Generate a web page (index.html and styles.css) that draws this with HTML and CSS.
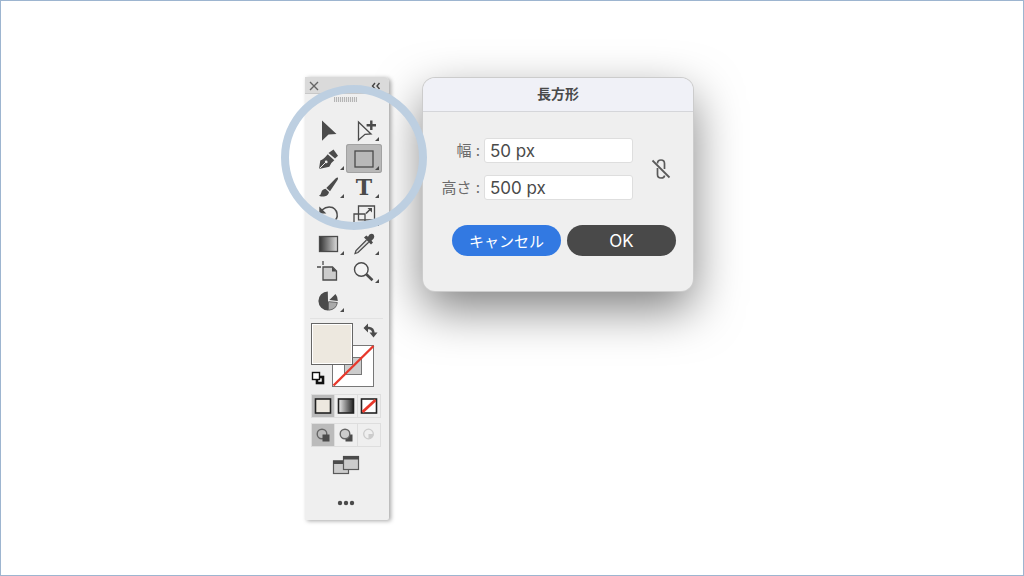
FILE: index.html
```html
<!DOCTYPE html>
<html lang="ja">
<head>
  <meta charset="UTF-8" />
  <meta name="viewport" content="width=device-width, initial-scale=1.0"/>
  <title>長方形ツール</title>
  <link rel="stylesheet" href="styles.css">
</head>
<body>

  <main class="stage">
    <aside class="panel">
      <div class="panel-head">
        <button class="head-btn" aria-label="閉じる">
          <svg width="10" height="10" viewBox="0 0 10 10"><path d="M1 1l8 8M9 1l-8 8" stroke="#666" stroke-width="1.4"/></svg>
        </button>
        <button class="head-btn" aria-label="折りたたむ">
          <svg width="10" height="10" viewBox="0 0 10 10"><path d="M4 2L1.5 5L4 8M8.5 2L6 5L8.5 8" fill="none" stroke="#444" stroke-width="1.4"/></svg>
        </button>
      </div>
      <div class="grip"></div>

      <div class="tools">
        <button class="tool" aria-label="選択">
          <svg viewBox="0 0 36 28"><path class="dark" d="M12 4.5L26.5 18L18.5 18.6L12 24.7z"/></svg>
        </button>
        <button class="tool" aria-label="グループ選択">
          <svg viewBox="0 0 36 28">
            <path class="line" d="M12.5 6L25 18L19 18.3L12.5 24z"/>
            <path d="M25.3 4.500v9.400M20.600 9.200H30" stroke="#4b4b4b" stroke-width="2.4"/>
            <path class="dark" d="M33 21v4h-4z"/>
          </svg>
        </button>
        <button class="tool" aria-label="ペン">
          <svg viewBox="0 0 36 28">
            <path class="dark" d="M18.5 8L23.5 4.5L28 10.8L25 13.5z"/>
            <path class="dark" d="M9 24L10.3 15.5Q13.5 14.5 17.7 9.2L24.3 15.3Q20.5 18 19.3 21.8z"/>
            <path d="M9.5 23.5l6-6" stroke="#eee" stroke-width="1"/>
            <circle cx="16.2" cy="16.9" r="1.4" fill="#eee"/>
            <path class="dark" d="M34 21v4h-4z"/>
          </svg>
        </button>
        <button class="tool selected" aria-label="長方形">
          <svg viewBox="0 0 36 28">
            <rect x="9" y="6" width="18" height="16" fill="#b8b8b8" stroke="#4b4b4b" stroke-width="1.3"/>
            <path class="dark" d="M33 21v4h-4z"/>
          </svg>
        </button>
        <button class="tool" aria-label="ブラシ">
          <svg viewBox="0 0 36 28">
            <path class="dark" d="M27.8 4.5Q28.5 5.5 27.5 7L20 18.2L16.3 14.9L25.800 5.200Q27 4.200 27.800 4.500z"/>
            <path class="dark" d="M15.5 15.8L19 19Q18.5 22.5 15 23.3Q12 24 9 22.7Q11 21.8 11.3 19.5Q12 16.3 15.5 15.8z"/>
            <path class="dark" d="M34 21v4h-4z"/>
          </svg>
        </button>
        <button class="tool" aria-label="文字">
          <svg viewBox="0 0 36 28">
            <text class="type" x="18" y="22" text-anchor="middle">T</text>
            <path class="dark" d="M33 21v4h-4z"/>
          </svg>
        </button>
        <button class="tool" aria-label="回転">
          <svg viewBox="0 0 36 28">
            <path d="M12 9Q17 4.5 22.5 6.5Q27.5 9 27.2 15.5Q26 21 20 22" fill="none" stroke="#4b4b4b" stroke-width="1.5"/>
            <path class="dark" d="M9.3 5.5v7h7z"/>
          </svg>
        </button>
        <button class="tool" aria-label="拡大・縮小">
          <svg viewBox="0 0 36 28">
            <path class="line" d="M12.5 5H28.5V18.8H12.5zM8 13H19V22H8z"/>
            <path d="M20 12.5l4-4" stroke="#4b4b4b" stroke-width="1.6"/>
            <path class="dark" d="M21.5 7H26v4.5z"/>
            <path class="dark" d="M33 21v4h-4z"/>
          </svg>
        </button>
        <button class="tool" aria-label="グラデーション">
          <svg viewBox="0 0 36 28">
            <defs><linearGradient id="fade"><stop offset="0" stop-color="#333"/><stop offset="1" stop-color="#ddd"/></linearGradient></defs>
            <rect x="9.5" y="6.5" width="18" height="15" fill="url(#fade)" stroke="#4b4b4b" stroke-width="1.3"/>
            <path class="dark" d="M34 21v4h-4z"/>
          </svg>
        </button>
        <button class="tool" aria-label="スポイト">
          <svg viewBox="0 0 36 28">
            <path d="M20.5 10L10 20.5L9 23.5L12 22.5L22.7 12.2" fill="#ddd" stroke="#4b4b4b" stroke-width="1.2"/>
            <path class="dark" d="M18 7.500L20.3 5.500L22 6.700L23.500 4.500Q26 3 27.800 4.700Q29 6.500 27.500 8.700L25.500 10.800L27 12.500L25 14.500z"/>
            <path class="dark" d="M33 21v4h-4z"/>
          </svg>
        </button>
        <button class="tool" aria-label="アートボード">
          <svg viewBox="0 0 36 28">
            <path d="M13 9H22.5L26.5 13V22H13z" fill="#ccc" stroke="#4b4b4b" stroke-width="1.3"/>
            <path class="dark" d="M22 9V13.500H26.5z"/>
            <path class="line" d="M13 3V7M7 9H11"/>
          </svg>
        </button>
        <button class="tool" aria-label="ズーム">
          <svg viewBox="0 0 36 28">
            <circle cx="15.3" cy="11.5" r="6.8" fill="#f4f4f4" stroke="#4b4b4b" stroke-width="1.4"/>
            <path d="M20.3 16.3L26.5 22.3" stroke="#4b4b4b" stroke-width="2.6"/>
            <path class="dark" d="M33 21v4h-4z"/>
          </svg>
        </button>
        <button class="tool" aria-label="グラフ">
          <svg viewBox="0 0 36 28">
            <path class="dark" d="M17.8 4.5A9.5 9.5 0 1 0 18 23.500V14z"/>
            <path class="dark" d="M19.3 13L25.5 7Q28 10 27.8 14z"/>
            <path d="M18.5 14.700L27.3 15.500Q26.5 22.500 18.5 23.200z" fill="#aaa" stroke="#666" stroke-width="1"/>
            <path class="dark" d="M34 21v4h-4z"/>
          </svg>
        </button>
      </div>

      <div class="colors">
        <svg viewBox="0 0 72 68" width="72" height="68" role="img" aria-label="塗りと線">
          <!-- stroke swatch -->
          <rect x="22.500" y="23.5" width="41" height="41" fill="#fff" stroke="#777"/>
          <rect x="34.5" y="35.5" width="17" height="17" fill="#ccc" stroke="#777"/>
          <path d="M23.5 63.5L63.5 24" stroke="#e8382b" stroke-width="2.4"/>
          <!-- fill swatch -->
          <rect x="1.5" y="1.5" width="41" height="41" fill="#ede8df" stroke="#666"/>
          <rect x="2.5" y="2.5" width="39" height="39" fill="none" stroke="#fff"/>
          <!-- swap -->
          <path d="M56 6H59Q63.5 6.5 63.5 12" fill="none" stroke="#4b4b4b" stroke-width="2.4"/>
          <path class="dark" d="M58 1.5V10.5L53.500 6zM59.5 10.500H67.5L63.5 15.5z"/>
          <!-- default -->
          <rect x="7" y="55" width="6" height="6" fill="#fff" stroke="#111" stroke-width="2.6"/>
          <rect x="2.5" y="50.5" width="7" height="7" fill="#fff" stroke="#111" stroke-width="1.4"/>
        </svg>
      </div>

      <div class="modes">
        <button class="mode on" aria-label="カラー"><svg viewBox="0 0 22 22"><rect x="3.5" y="4" width="15" height="14" fill="#ede8df" stroke="#222" stroke-width="1.6"/></svg></button>
        <button class="mode" aria-label="グラデーション塗り">
          <svg viewBox="0 0 22 22">
            <defs><linearGradient id="fade-light"><stop offset="0" stop-color="#eee"/><stop offset="1" stop-color="#222"/></linearGradient></defs>
            <rect x="3.5" y="4" width="15" height="14" fill="url(#fade-light)" stroke="#222" stroke-width="1.6"/>
          </svg>
        </button>
        <button class="mode" aria-label="なし"><svg viewBox="0 0 22 22"><rect x="3.5" y="4" width="15" height="14" fill="#fff" stroke="#222" stroke-width="1.6"/><path d="M4.5 17L17.5 5" stroke="#e8382b" stroke-width="2.8"/></svg></button>
      </div>
      <div class="modes">
        <button class="mode on" aria-label="標準描画"><svg viewBox="0 0 22 22"><circle cx="10" cy="10" r="4.8" fill="none" stroke="#666" stroke-width="1.4"/><rect x="10.5" y="10.5" width="7" height="7" fill="#4b4b4b"/></svg></button>
        <button class="mode" aria-label="背面描画"><svg viewBox="0 0 22 22"><rect x="10.500" y="10.5" width="7" height="7" fill="#4b4b4b"/><circle cx="10" cy="10" r="4.8" fill="#ccc" stroke="#666" stroke-width="1.4"/></svg></button>
        <button class="mode" aria-label="内側描画" disabled><svg viewBox="0 0 22 22"><circle cx="10.500" cy="10" r="4.8" fill="none" stroke="#ccc" stroke-width="1.3"/><path d="M10.500 10h5a5 5 0 0 1-5 5z" fill="#ccc"/></svg></button>
      </div>

      <button class="wide-btn" aria-label="スクリーンモード">
        <svg width="28" height="22" viewBox="0 0 28 22">
          <rect x="1.5" y="6" width="15" height="12.500" fill="#ccc" stroke="#5a5a5a" stroke-width="1.2"/>
          <path class="dark" d="M1 5.5h16V9H1z"/>
          <rect x="11.5" y="1.500" width="15" height="13" fill="#ccc" stroke="#5a5a5a" stroke-width="1.2"/>
          <path class="dark" d="M11 1h16v3.5H11z"/>
        </svg>
      </button>
      <button class="wide-btn more" aria-label="ツールバーを編集">
        <svg width="18" height="6" viewBox="0 0 18 6"><circle class="dark" cx="3" cy="3" r="2.2"/><circle class="dark" cx="9" cy="3" r="2.2"/><circle class="dark" cx="15" cy="3" r="2.2"/></svg>
      </button>
      <div class="ring"></div>
    </aside>

    <form class="dialog">
      <h1 class="dialog-title">長方形</h1>
      <div class="dialog-body">
        <div class="size">
          <div class="fields">
            <label for="width">幅 :</label>
            <input id="width" type="text" value="50 px">
            <label for="height">高さ :</label>
            <input id="height" type="text" value="500 px">
          </div>
          <button class="link-btn" type="button" aria-label="縦横比を固定">
            <svg width="20" height="22" viewBox="0 0 20 22">
              <path d="M6.5 5.500Q6.5 2 10 2Q13.5 2 13.5 5.500V11M6.5 10V16.5Q6.5 20 10 20Q13.5 20 13.5 17.500" fill="none" stroke="#5a5a5a" stroke-width="1.7"/>
              <path d="M1.5 2.500L18.500 19.500" stroke="#5a5a5a" stroke-width="1.8"/>
            </svg>
          </button>
        </div>
        <div class="actions">
          <button class="cancel" type="button">キャンセル</button>
          <button class="ok" type="button">OK</button>
        </div>
      </div>
    </form>
  </main>

</body>
</html>
```
FILE: styles.css
```css
* {
  box-sizing: border-box;
}
body {
  margin: 0;
  font-family: Inter, "Noto Sans CJK JP", sans-serif;
  background-color: #fff;
  color: #4a4a4a;
}
button {
  margin: 0;
  padding: 0;
  border: none;
  background: none;
  font-family: inherit;
  cursor: pointer;
}
svg {
  display: block;
}

.stage {
  display: flex;
  justify-content: center;
  align-items: flex-start;
  gap: 34px;
  min-height: 100vh;
  padding: 76px 26px 20px 0;
  border: 1px solid #9db5d0;
}

/* toolbar */
.panel {
  position: relative;
  z-index: 1;
  width: 84px;
  padding-bottom: 14px;
  border-radius: 0 5px 2px 0;
  background-color: #efefef;
  box-shadow: 2px 1px 4px rgba(0,0,0,0.35);
}
.panel-head {
  display: flex;
  justify-content: space-between;
  align-items: center;
  height: 17px;
  padding: 2px 8px 0 4px;
  border-bottom: 1px solid #c8c8c8;
  border-radius: 0 5px 0 0;
  background-color: #dadada;
}
.grip {
  width: 23px;
  height: 5px;
  margin: 3px auto 14px 29px;
  background: repeating-linear-gradient(90deg, #b5b5b5 0 1px, #e8e8e8 1px 2px);
}
.tools {
  display: grid;
  grid-template-columns: 36px 36px;
  grid-template-rows: repeat(7, 1fr);
  height: 199px;
  margin-left: 5px;
}
.tool svg {
  width: 36px;
  height: 28px;
}
.selected {
  border-radius: 3px;
  background-color: #b8b8b8;
  box-shadow: inset 0 0 0 1px #a2a2a2;
}
.dark {
  fill: #4b4b4b;
}
.line {
  fill: none;
  stroke: #4b4b4b;
  stroke-width: 1.3;
}
.type {
  font: bold 22px "DejaVu Serif", serif;
  fill: #4b4b4b;
}
.colors {
  margin: 3px 6px 0 5px;
  padding-top: 3px;
  border-top: 1px solid #e2e2e2;
}
.modes {
  display: grid;
  grid-template-columns: repeat(3, 1fr);
  width: 70px;
  margin: 4px 0 5px 6px;
  border: 1px solid #dedede;
}
.mode + .mode {
  border-left: 1px solid #dedede;
}
.mode svg {
  width: 22px;
  height: 22px;
}
.on {
  background-color: #bbb;
}
.wide-btn {
  display: block;
  margin: 8px auto 0 27px;
}
.more {
  margin: 23px auto 0 32px;
}
.ring {
  position: absolute;
  top: 8px;
  left: -24px;
  width: 146px;
  height: 145px;
  border: 8px solid #bdcfe1;
  border-radius: 50%;
  pointer-events: none;
}

/* rectangle dialog */
.dialog {
  width: 270px;
  margin-top: 1px;
  border-radius: 12px;
  background-color: #efefef;
  box-shadow: 0 0 0 1px #ccc, 0 18px 48px rgba(0,0,0,0.5);
}
.dialog-title {
  height: 34px;
  margin: 0;
  border-bottom: 1px solid #d5d6da;
  border-radius: 12px 12px 0 0;
  background-color: #f0f1f7;
  font-size: 14px;
  line-height: 32px;
  text-align: center;
}
.dialog-body {
  padding: 26px 17px 35px;
}
.size {
  display: flex;
  align-items: center;
  gap: 18px;
}
.fields {
  display: grid;
  grid-template-columns: 40px 149px;
  gap: 12px 4px;
  align-items: center;
}
.fields label {
  font-size: 15px;
  line-height: 25px;
  color: #6a6a6a;
  text-align: right;
  white-space: nowrap;
}
.fields input {
  width: 100%;
  height: 25px;
  padding: 0 5px;
  border: 1px solid #dedede;
  border-radius: 3px;
  background-color: #fff;
  font-family: inherit;
  font-size: 17px;
  color: #4a4a4a;
}
.actions {
  display: flex;
  justify-content: flex-end;
  gap: 6px;
  margin-top: 25px;
}
.actions button {
  width: 109px;
  height: 31px;
  border-radius: 16px;
  font-size: 15px;
  color: #fff;
}
.actions .cancel {
  background-color: #3279e2;
}
.actions .ok {
  background-color: #494949;
  font-size: 17px;
}
```
